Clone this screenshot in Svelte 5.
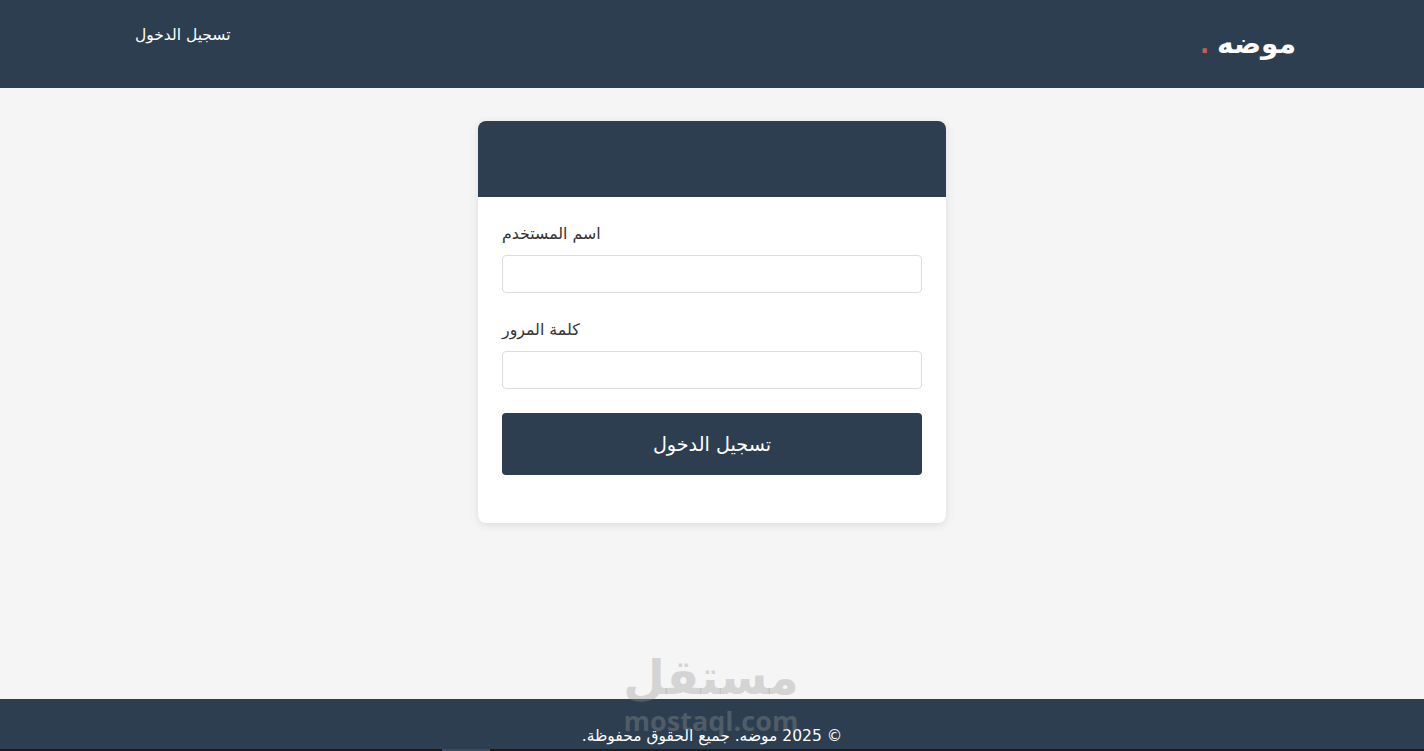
<script>
  let username = $state('');
  let password = $state('');
</script>

<div class="page" dir="rtl">
  <header class="topbar">
    <div class="logo">موضه<span class="dot">.</span></div>
    <a class="nav-link" href="#login">تسجيل الدخول</a>
  </header>

  <main class="content">
    <section class="card">
      <div class="card-head"></div>
      <form class="card-body" onsubmit={(e) => e.preventDefault()}>
        <div class="field">
          <label for="username">اسم المستخدم</label>
          <input id="username" type="text" bind:value={username} />
        </div>
        <div class="field">
          <label for="password">كلمة المرور</label>
          <input id="password" type="password" bind:value={password} />
        </div>
        <button type="submit">تسجيل الدخول</button>
      </form>
    </section>
  </main>

  <footer class="footer">© 2025 موضه. جميع الحقوق محفوظة.</footer>
  <div class="strip"><span></span></div>

  <div class="watermark" aria-hidden="true">
    <div class="wm-ar">مستقل</div>
    <div class="wm-en" dir="ltr">mostaql.com</div>
  </div>
</div>

<style>
  :global(body) {
    margin: 0;
    background: #f5f5f5;
    font-family: "DejaVu Sans", "Noto Sans", sans-serif;
  }

  .page {
    position: relative;
    height: 751px;
    display: flex;
    flex-direction: column;
    overflow: hidden;
  }

  .topbar {
    height: 88px;
    flex: none;
    box-sizing: border-box;
    background: #2c3e50;
    color: #fff;
    display: flex;
    justify-content: space-between;
    align-items: flex-start;
    padding: 0 128px 0 135px;
  }

  .logo {
    font-size: 28px;
    font-weight: 700;
    line-height: 34px;
    margin-top: 27px;
  }

  .dot {
    margin-right: 8px;
    color: #c8604f;
    font-size: 24px;
    font-weight: 700;
  }

  .nav-link {
    color: #fff;
    text-decoration: none;
    font-size: 15.5px;
    line-height: 20px;
    margin-top: 25px;
  }

  .content {
    flex: 1;
    display: flex;
    justify-content: center;
    align-items: flex-start;
    padding-top: 33px;
  }

  .card {
    width: 468px;
    background: #fff;
    border-radius: 8px;
    overflow: hidden;
    box-shadow: 0 2px 10px rgba(0, 0, 0, 0.1);
  }

  .card-head {
    height: 76px;
    background: #2c3e50;
  }

  .card-body {
    padding: 24px 24px 48px;
  }

  .field {
    margin-bottom: 24px;
  }

  label {
    display: block;
    height: 26px;
    margin-bottom: 8px;
    color: #333;
    font-size: 15.8px;
    line-height: 26px;
    text-align: left;
  }

  input {
    display: block;
    width: 100%;
    height: 38px;
    box-sizing: border-box;
    border: 1px solid #ddd;
    border-radius: 4px;
    background: #fff;
  }

  button {
    display: block;
    width: 100%;
    height: 62px;
    border: none;
    border-radius: 4px;
    background: #2c3e50;
    color: #fff;
    font-family: inherit;
    font-size: 19.2px;
  }

  .footer {
    height: 50px;
    flex: none;
    box-sizing: border-box;
    background: #2c3e50;
    color: #fff;
    font-size: 15.5px;
    line-height: 20px;
    padding-top: 27px;
    text-align: center;
  }

  .strip {
    height: 2px;
    flex: none;
    background: #1c1c1c;
  }

  .strip span {
    display: block;
    width: 48px;
    height: 2px;
    margin-right: 934px;
    background: #3c4a60;
  }

  .watermark {
    position: absolute;
    left: 611px;
    top: 645px;
    width: 200px;
    text-align: center;
    color: rgba(150, 150, 150, 0.35);
    pointer-events: none;
  }

  .wm-ar {
    font-size: 48px;
    font-weight: 700;
    line-height: 64px;
  }

  .wm-en {
    font-family: "Open Sans", sans-serif;
    font-size: 27px;
    font-weight: 700;
    line-height: 24px;
  }
</style>
